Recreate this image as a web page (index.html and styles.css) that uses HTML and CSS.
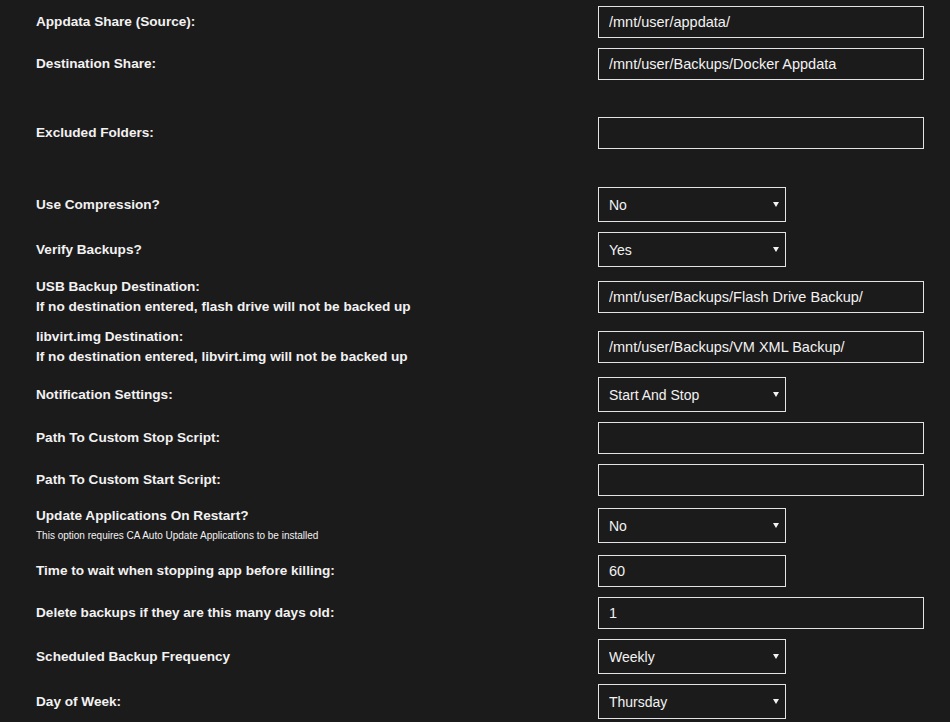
FILE: index.html
```html
<!DOCTYPE html>
<html lang="en">
<head>
    <meta charset="UTF-8">
    <meta name="viewport" content="width=device-width, initial-scale=1.0">
    <title>Backup Settings</title>
    <link rel="stylesheet" href="styles.css">
</head>
<body>
    <form class="settings">
        <div class="row">
            <label class="label">Appdata Share (Source):</label>
            <input class="field wide" type="text" value="/mnt/user/appdata/">
        </div>
        <div class="row">
            <label class="label">Destination Share:</label>
            <input class="field wide" type="text" value="/mnt/user/Backups/Docker Appdata">
        </div>
        <div class="row spaced">
            <label class="label">Excluded Folders:</label>
            <input class="field wide" type="text" value="">
        </div>
        <div class="row spaced more">
            <label class="label">Use Compression?</label>
            <span class="select-wrap">
                <select class="field choice"><option>No</option><option>Yes</option></select>
            </span>
        </div>
        <div class="row">
            <label class="label">Verify Backups?</label>
            <span class="select-wrap">
                <select class="field choice"><option>Yes</option><option>No</option></select>
            </span>
        </div>
        <div class="row">
            <label class="label">USB Backup Destination:<br>If no destination entered, flash drive will not be backed up</label>
            <input class="field wide" type="text" value="/mnt/user/Backups/Flash Drive Backup/">
        </div>
        <div class="row">
            <label class="label">libvirt.img Destination:<br>If no destination entered, libvirt.img will not be backed up</label>
            <input class="field wide" type="text" value="/mnt/user/Backups/VM XML Backup/">
        </div>
        <div class="row">
            <label class="label">Notification Settings:</label>
            <span class="select-wrap">
                <select class="field choice"><option>Start And Stop</option><option>Errors Only</option><option>None</option></select>
            </span>
        </div>
        <div class="row">
            <label class="label">Path To Custom Stop Script:</label>
            <input class="field wide" type="text" value="">
        </div>
        <div class="row">
            <label class="label">Path To Custom Start Script:</label>
            <input class="field wide" type="text" value="">
        </div>
        <div class="row">
            <label class="label">Update Applications On Restart?<span class="note">This option requires CA Auto Update Applications to be installed</span></label>
            <span class="select-wrap">
                <select class="field choice"><option>No</option><option>Yes</option></select>
            </span>
        </div>
        <div class="row">
            <label class="label">Time to wait when stopping app before killing:</label>
            <input class="field narrow" type="text" value="60">
        </div>
        <div class="row">
            <label class="label">Delete backups if they are this many days old:</label>
            <input class="field wide" type="text" value="1">
        </div>
        <div class="row">
            <label class="label">Scheduled Backup Frequency</label>
            <span class="select-wrap">
                <select class="field choice"><option>Weekly</option><option>Daily</option><option>Monthly</option></select>
            </span>
        </div>
        <div class="row">
            <label class="label">Day of Week:</label>
            <span class="select-wrap">
                <select class="field choice"><option>Thursday</option><option>Friday</option></select>
            </span>
        </div>
    </form>
</body>
</html>
```

FILE: styles.css
```css
body {
    margin: 0;
    background-color: #1c1b1b;
    color: #f2f2f2;
    font-family: 'Liberation Sans', Arial, sans-serif;
}
.settings {
    padding: 6px 0 0 36px;
}
.row {
    display: flex;
    align-items: center;
    margin-bottom: 10px;
}
.row.spaced {
    margin-top: 37px;
}
.row.spaced.more {
    margin-top: 38px;
}
.label {
    width: 562px;
    flex-shrink: 0;
    font-size: 13.6px;
    font-weight: bold;
    line-height: 20px;
}
.note {
    display: block;
    font-size: 10px;
    font-weight: normal;
    line-height: 19px;
}
.field {
    box-sizing: border-box;
    margin: 0;
    border: 1px solid #e3e3e3;
    border-radius: 0;
    background-color: transparent;
    color: #f2f2f2;
    font-family: 'Liberation Sans', Arial, sans-serif;
    outline: none;
}
input.field {
    height: 32px;
    padding: 0 10px;
    font-size: 14.5px;
}
.wide {
    width: 326px;
}
.narrow {
    width: 188px;
}
.select-wrap {
    position: relative;
    display: inline-block;
}
.select-wrap::after {
    content: '';
    position: absolute;
    right: 7px;
    top: 15px;
    border-left: 3.5px solid transparent;
    border-right: 3.5px solid transparent;
    border-top: 5px solid #f2f2f2;
    pointer-events: none;
}
.choice {
    display: block;
    width: 188px;
    height: 35px;
    padding: 0 20px 0 10px;
    font-size: 14px;
    appearance: none;
    -webkit-appearance: none;
}
.choice option {
    background-color: #1c1b1b;
}
```
